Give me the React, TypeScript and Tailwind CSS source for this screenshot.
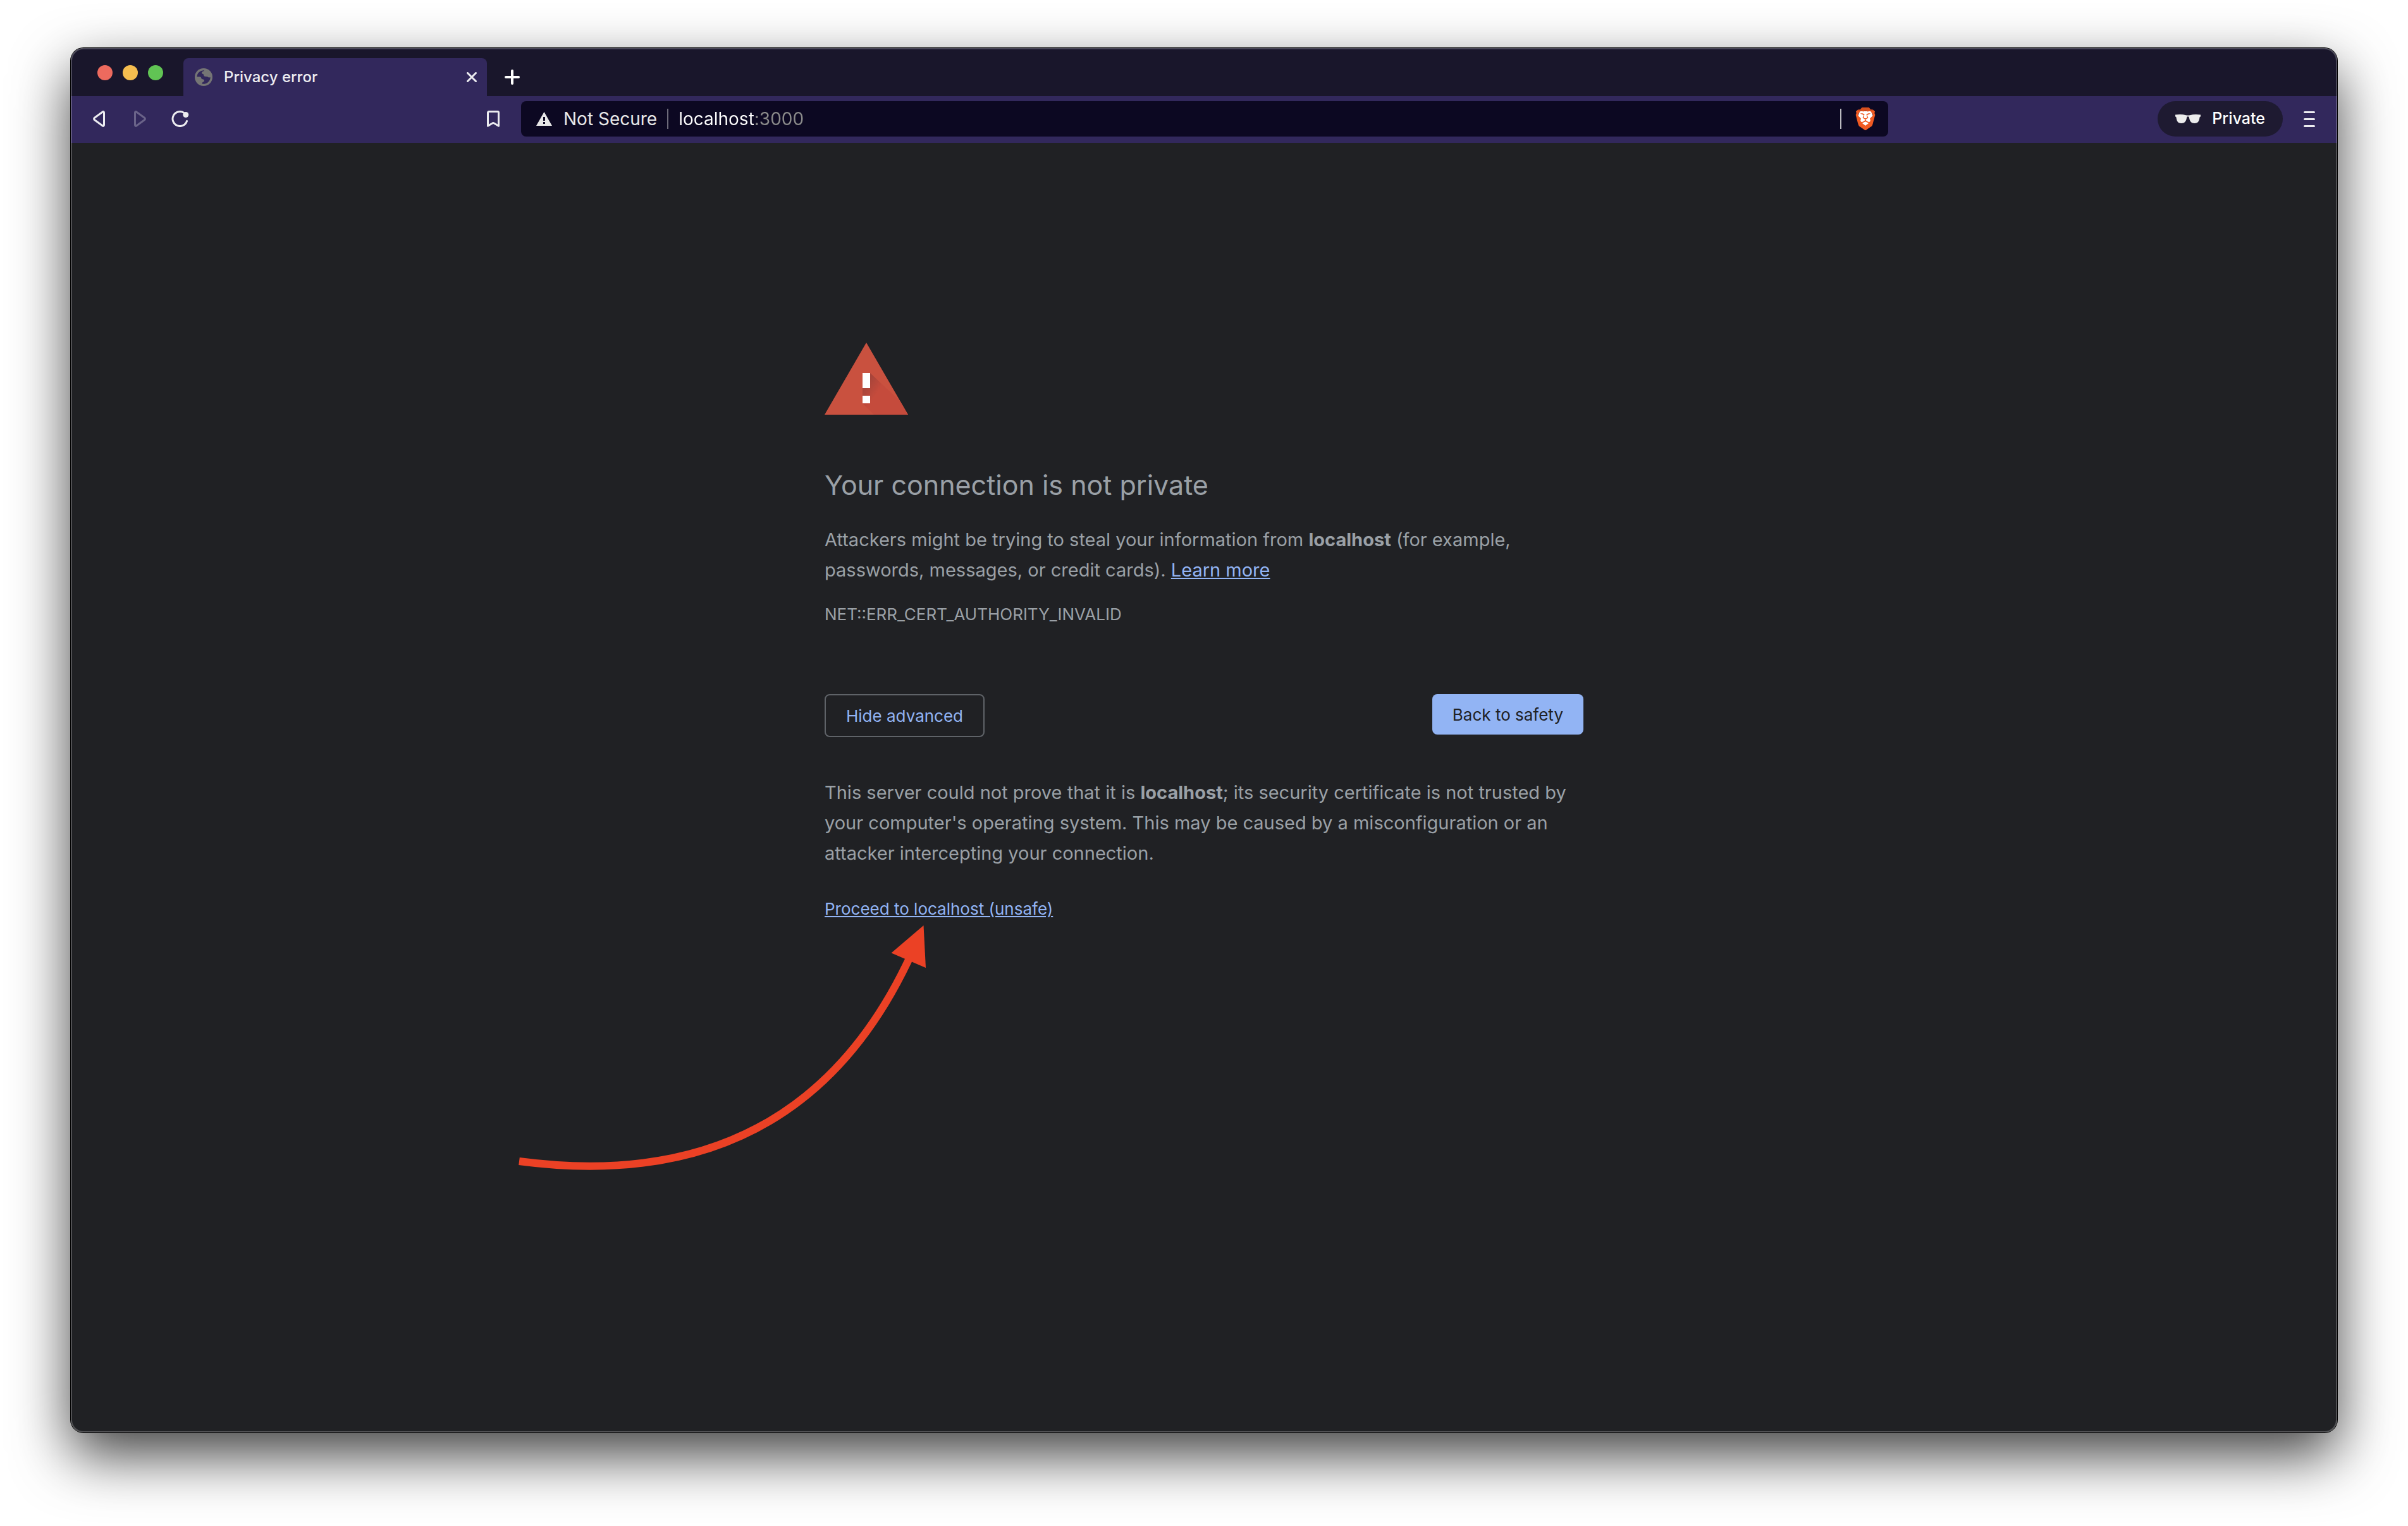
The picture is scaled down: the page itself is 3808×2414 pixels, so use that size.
import React from "react";
import { SiBrave } from "react-icons/si";

const HOST = "localhost";

function GlobeIcon() {
  return (
    <svg viewBox="0 0 28 28" className="size-7 shrink-0" aria-hidden="true">
      <circle cx="14" cy="14" r="14" fill="#757575" />
      <path
        d="M3.3 13.6A10.8 10.8 0 0 1 15 3.3L14.2 4.6C12.5 5 11 6 11 7.2c0 1.300 1.600 1.500 2.500 2.100 1 .7.6 2.400 1.500 3.300 1 .9 3 .6 4.600.6 1.200 0 1.600 1.300 2.600 1.300s1.500-.5 2.500-.3A10.800 10.800 0 0 1 11.500 24.500c0-1.500.8-3 2.500-3.300 1.500-.3 1.200-2.500.2-3.200-1.200-.8-2.800-.3-3.500-1.400-.7-1-.4-2.300-1.700-2.800-1.500-.5-3.700-.2-5.700-.2Z"
        fill="#32285c"
      />
    </svg>
  );
}

function BackIcon() {
  return (
    <svg viewBox="0 0 20 26" className="h-[26px] w-5" fill="none" stroke="currentColor" strokeWidth="3" strokeLinejoin="round" aria-hidden="true">
      <path d="M17.500 3.200v19.600c0 1.300-1.200 2-2.200 1.200L2.600 14.800c-1.300-1-1.300-2.600 0-3.600L15.300 2c1-.8 2.200-.1 2.200 1.200Z" />
    </svg>
  );
}

function ReloadIcon() {
  return (
    <svg viewBox="0 0 28 26" className="h-[26px] w-7" fill="none" aria-hidden="true">
      <path d="M24.500 16.500A11.500 11.500 0 1 1 19.500 3.200" stroke="currentColor" strokeWidth="3" strokeLinecap="round" />
      <circle cx="22.800" cy="6.500" r="4.500" fill="currentColor" />
    </svg>
  );
}

function BookmarkIcon() {
  return (
    <svg viewBox="0 0 20 26" className="h-[26px] w-5" fill="none" stroke="currentColor" strokeWidth="3" strokeLinejoin="round" aria-hidden="true">
      <path d="M1.500 24V3a1.500 1.500 0 0 1 1.500-1.500h14A1.500 1.500 0 0 1 18.500 3v21.300L11.400 20a2.600 2.600 0 0 0-2.800 0L1.500 24.300Z" />
    </svg>
  );
}

function InsecureIcon() {
  return (
    <svg viewBox="0 0 25 22" className="h-[22px] w-[25px] shrink-0" aria-hidden="true">
      <path d="M12.500 0 25 22H0Z" fill="#e8e8e8" />
      <path d="M11 8h3v6h-3zM11 16h3v3h-3z" fill="#0c0822" />
    </svg>
  );
}

function BraveIcon() {
  return (
    <svg viewBox="0 0 24 24" className="size-9" aria-hidden="true">
      <defs>
        <linearGradient id="mane" x1="0" y1="0" x2="0" y2="1">
          <stop offset="0.15" stopColor="#d9501e" />
          <stop offset="0.16" stopColor="#f05a22" />
        </linearGradient>
      </defs>
      <path d="M6 4h12l2 5-2 8-6 4-6-4-2-8Z" fill="#fff" />
      <SiBrave size={24} fill="url(#mane)" />
    </svg>
  );
}

function GlassesIcon() {
  return (
    <svg viewBox="0 0 40 14" className="h-[14px] w-10" fill="#ececec" aria-hidden="true">
      <path d="M0 .6C6-.3 12-.1 17 1.200c2 .5 4 .5 6 0C28-.1 34-.3 40 .6v2.600l-1.500 1.300C37.800 10 36.500 14 30.500 14c-5.500 0-7.500-3-8.500-8.500-.2-1.500-.8-2.200-2-2.200s-1.800.7-2 2.200C17 11 15 14 9.500 14 3.500 14 2.200 10 1.500 4.500L0 3.200Z" />
    </svg>
  );
}

function WarningIcon() {
  return (
    <svg viewBox="0 0 132 114" className="h-[114px] w-[132px]" role="img" aria-label="Warning">
      <defs>
        <linearGradient id="cast" gradientUnits="userSpaceOnUse" x1="66" y1="66" x2="84" y2="78">
          <stop offset="0" stopColor="#a8453a" />
          <stop offset="1" stopColor="#c54b3c" />
        </linearGradient>
      </defs>
      <path d="M66 0 132 114H0Z" fill="#c9513f" />
      <path d="M72 48 119 92 132 114H78L60 96V84L60 72Z" fill="url(#cast)" />
      <path d="M60 48h12v24H60zM60 84h12v12H60z" fill="#fff" />
    </svg>
  );
}

function PointerArrow() {
  return (
    <svg
      viewBox="812 1456 660 400"
      className="pointer-events-none absolute top-full left-[-492px] mt-0.5 h-[400px] w-[660px]"
      aria-hidden="true"
    >
      <path d="M821 1837Q1260 1895 1438 1516" fill="none" stroke="#eb4125" strokeWidth="12" />
      <path d="M1460.500 1464 1464 1531 1409.500 1507.500Z" fill="#eb4125" />
    </svg>
  );
}

function TabStrip() {
  return (
    <header className="flex h-[76px] items-end bg-[#19162b]">
      <div className="flex w-[178px] gap-4 self-center pt-0.5 pl-[42px]">
        <button type="button" aria-label="Close window" className="size-6 rounded-full bg-[#ed6a5e]" />
        <button type="button" aria-label="Minimise window" className="size-6 rounded-full bg-[#f5bd4f]" />
        <button type="button" aria-label="Zoom window" className="size-6 rounded-full bg-[#61c454]" />
      </div>
      <div className="flex h-[60px] w-[480px] items-center rounded-t-lg bg-[#32285c] pr-4 pl-[18px] text-[#ececf0]">
        <GlobeIcon />
        <span className="ml-[18px] text-[24px] font-medium">Privacy error</span>
        <button type="button" aria-label="Close tab" className="ml-auto">
          <svg viewBox="0 0 16 16" className="size-4" stroke="currentColor" strokeWidth="3" strokeLinecap="round" aria-hidden="true">
            <path d="M1.500 1.500l13 13M14.500 1.500l-13 13" />
          </svg>
        </button>
      </div>
      <button type="button" aria-label="New tab" className="flex h-[60px] items-center pl-7 text-white">
        <svg viewBox="0 0 24 24" className="size-6" stroke="currentColor" strokeWidth="4" strokeLinecap="round" aria-hidden="true">
          <path d="M12 2v20M2 12h20" />
        </svg>
      </button>
    </header>
  );
}

function Toolbar() {
  return (
    <nav className="flex h-[74px] items-center bg-[#32285c] pb-0.5 text-[#ececf0]">
      <div className="flex w-[658px] items-center pl-[35px]">
        <button type="button" aria-label="Back"><BackIcon /></button>
        <button type="button" aria-label="Forward" disabled className="ml-11 rotate-180 opacity-30"><BackIcon /></button>
        <button type="button" aria-label="Reload" className="ml-10"><ReloadIcon /></button>
      </div>
      <button type="button" aria-label="Bookmark this page"><BookmarkIcon /></button>
      <div className="ml-[34px] flex h-14 max-w-[2162px] flex-1 items-center rounded-lg bg-[#0c0822] pr-[18px] pl-6 text-[28px]">
        <button type="button" className="flex items-center gap-[18px] text-[#e8e8e8]">
          <InsecureIcon />
          Not Secure
        </button>
        <span className="mx-4 h-8 w-0.5 bg-[#6d6b7a]" />
        <input
          type="text"
          aria-label="Address"
          defaultValue={HOST + ":3000"}
          className="min-w-0 flex-1 bg-[linear-gradient(to_right,#ffffff_119px,#8a8a8a_119px)] bg-clip-text text-transparent caret-white outline-none"
        />
        <span className="mr-5 h-8 w-0.5 bg-[#bbbabf]" />
        <button type="button" aria-label="Brave Shields"><BraveIcon /></button>
      </div>
      <button type="button" className="ml-auto flex h-14 items-center gap-[18px] rounded-full bg-[#1e1a31] px-7 text-[25px] font-medium text-white">
        <GlassesIcon />
        Private
      </button>
      <button type="button" aria-label="Menu" className="mr-[35px] ml-[33px]">
        <svg viewBox="0 0 18 26" className="h-[26px] w-[18px]" stroke="currentColor" strokeWidth="3" strokeLinecap="round" aria-hidden="true">
          <path d="M1.500 2.500h15M1.500 13.500h15M1.500 24.500h15" />
        </svg>
      </button>
    </nav>
  );
}

function PrivacyError() {
  return (
    <main className="flex-1 bg-[#202124] pt-[316px] text-[#9aa0a6]">
      <div className="mx-auto max-w-[1200px]">
        <WarningIcon />
        <h1 className="mt-20 text-[43px] leading-[62px]">Your connection is not private</h1>
        <p className="mt-8 text-[29px] leading-[48px]">
          Attackers might be trying to steal your information from <strong>{HOST}</strong> (for example, passwords,
          messages, or credit cards).{" "}
          <a href="#learn-more" className="text-[#92b4f4] underline">Learn more</a>
        </p>
        <p className="mt-[22px] text-[26px] leading-[48px]">NET::ERR_CERT_AUTHORITY_INVALID</p>
        <div className="mt-[102px] flex items-start justify-between text-[26px]">
          <button type="button" className="h-[68px] rounded-lg border-2 border-[#5f6368] px-8 text-[#92b4f4]">
            Hide advanced
          </button>
          <button type="button" className="h-16 rounded-lg bg-[#92b4f4] px-8 text-[#202124]">
            Back to safety
          </button>
        </div>
        <p className="mt-16 text-[29px] leading-[48px]">
          This server could not prove that it is <strong>{HOST}</strong>; its security certificate is not trusted by your
          computer's operating system. This may be caused by a misconfiguration or an attacker intercepting your
          connection.
        </p>
        <div className="relative mt-12 text-[26px] leading-[32px]">
          <a href="#proceed" className="text-[#92b4f4] underline">Proceed to localhost (unsafe)</a>
          <PointerArrow />
        </div>
      </div>
    </main>
  );
}

export default function App() {
  return (
    <div className="flex min-h-screen bg-white px-28 pt-[76px] pb-[148px] font-['Inter',sans-serif]">
      <div className="relative flex flex-1 flex-col overflow-hidden rounded-[20px] shadow-[0_0_0_1px_#000000,0_36px_90px_rgba(0,0,0,0.75)]">
        <TabStrip />
        <Toolbar />
        <PrivacyError />
        <div className="pointer-events-none absolute inset-0 rounded-[20px] shadow-[inset_0_0_0_2px_rgba(255,255,255,0.22)]" />
      </div>
    </div>
  );
}
